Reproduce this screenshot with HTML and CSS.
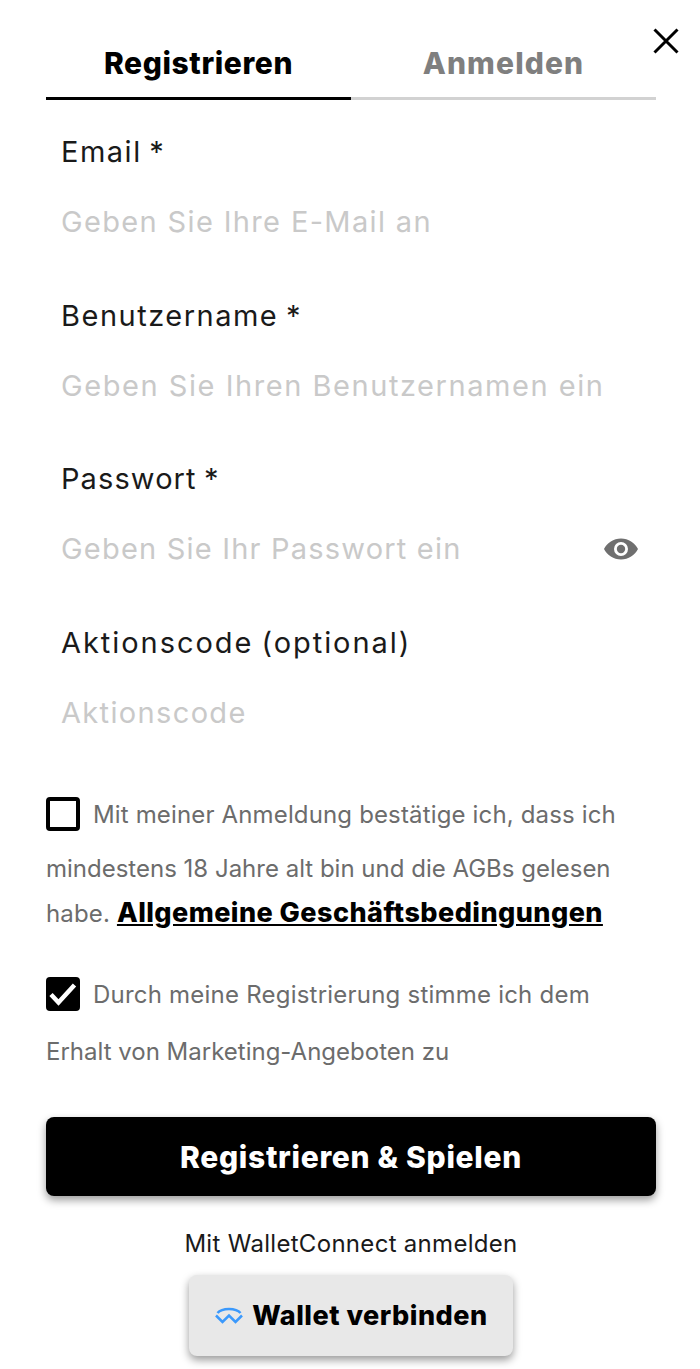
FILE: index.html
```html
<!DOCTYPE html>
<html lang="de">
<head>
<meta charset="utf-8">
<title>Registrieren</title>
<link rel="stylesheet" href="styles.css">
</head>
<body>
<main class="modal">
  <button class="close" aria-label="Schließen">
    <svg width="28" height="28" viewBox="0 0 28 28"><path d="M2.500 2.500 25.500 25.500M25.500 2.500 2.500 25.500" fill="none" stroke="#000" stroke-width="3"/></svg>
  </button>
  <nav class="tabs">
    <div class="tab active">Registrieren</div>
    <div class="tab second">Anmelden</div>
  </nav>
  <form class="form">
    <div class="field">
      <div class="label">Email *</div>
      <div class="input">Geben Sie Ihre E-Mail an</div>
    </div>
    <div class="field">
      <div class="label">Benutzername *</div>
      <div class="input wide">Geben Sie Ihren Benutzernamen ein</div>
    </div>
    <div class="field">
      <div class="label tight">Passwort *</div>
      <div class="input narrow">Geben Sie Ihr Passwort ein
        <svg class="eye" width="36" height="24" viewBox="0 0 36 24"><path fill-rule="evenodd" d="M18 1.500C10.500 1.500 4.200 5.800 1 12c3.200 6.200 9.500 10.500 17 10.500S31.800 18.200 35 12C31.800 5.800 25.500 1.500 18 1.500Zm0 3.500a7 7 0 1 1 0 14 7 7 0 0 1 0-14Z" fill="#6f6f6f"/><circle cx="18" cy="12" r="4.200" fill="#6f6f6f"/></svg>
      </div>
    </div>
    <div class="field">
      <div class="label loose">Aktionscode (optional)</div>
      <div class="input">Aktionscode</div>
    </div>
  </form>
  <section class="consents">
    <div class="consent first">
      <div class="line lead"><span class="box"></span>Mit meiner Anmeldung bestätige ich, dass ich</div>
      <div class="line l2">mindestens 18 Jahre alt bin und die AGBs gelesen</div>
      <div class="line l3">habe. <a class="terms" href="#">Allgemeine Geschäftsbedingungen</a></div>
    </div>
    <div class="consent">
      <div class="line lead wider"><span class="box checked"><svg width="34" height="34" viewBox="0 0 34 34"><path d="M5 17.500 12.500 25.500 28.500 8" fill="none" stroke="#fff" stroke-width="4.500"/></svg></span>Durch meine Registrierung stimme ich dem</div>
      <div class="line l2b">Erhalt von Marketing-Angeboten zu</div>
    </div>
  </section>
  <button class="submit">Registrieren &amp; Spielen</button>
  <p class="wc-text">Mit WalletConnect anmelden</p>
  <button class="wallet">
    <svg width="30" height="18" viewBox="0 0 30 18"><path d="M3.500 6C8 .5 22 .5 26.500 6M2 8.500 8.500 15 15 8.500 21.500 15 28 8.500" fill="none" stroke="#3b99fc" stroke-width="2.500"/></svg>
    Wallet verbinden
  </button>
</main>
</body>
</html>
```
FILE: styles.css
```css
* { box-sizing: border-box; }
html, body { margin: 0; padding: 0; background: #fff; }
body { font-family: Inter, "Open Sans", "Liberation Sans", sans-serif; color: #111; height: 1369px; overflow: hidden; }
.modal { position: relative; padding: 0 44px 0 46px; }
button { font-family: inherit; cursor: pointer; }
.close { position: absolute; top: 27px; right: 20px; width: 28px; height: 28px; padding: 0; border: 0; background: none; display: flex; }
.tabs { display: flex; padding-top: 40px; }
.tab { flex: 1; height: 60px; line-height: 47px; text-align: center; font-size: 30px; font-weight: 800; letter-spacing: 0.6px; color: #7f7f7f; border-bottom: 3px solid #d2d2d2; }
.tab.second { letter-spacing: 1.1px; }
.tab.active { color: #000; border-bottom-color: #000; }
.form { padding: 0 15px; }
.field { height: 163.500px; padding-top: 34px; }
.label { height: 36px; line-height: 36px; font-size: 29px; font-weight: 400; color: #1a1a1a; letter-spacing: 1.5px; word-spacing: -2px; }
.label.tight { letter-spacing: 1.1px; }
.label.loose { letter-spacing: 1.95px; }
.input { display: flex; justify-content: space-between; align-items: center; height: 36px; margin-top: 34px; line-height: 36px; font-size: 29px; color: #c9c9c9; letter-spacing: 1.35px; white-space: nowrap; }
.input.wide { letter-spacing: 1.55px; }
.input.narrow { letter-spacing: 1.2px; }
.eye { flex: none; margin-right: 2px; }
.consents { padding-top: 43px; padding-bottom: 1px; color: #6c6c6c; font-size: 24px; }
.consent { margin-bottom: 48px; }
.line { white-space: nowrap; letter-spacing: 0.15px; }
.lead.wider { letter-spacing: 0.22px; }
.lead { display: flex; align-items: center; height: 34px; }
.l2 { margin-top: 22px; height: 32px; line-height: 32px; letter-spacing: 0; }
.l3 { margin-top: 12px; height: 32px; line-height: 32px; }
.l2b { margin-top: 25px; height: 32px; line-height: 32px; letter-spacing: 0; }
.box { flex: none; width: 34px; height: 34px; margin-right: 13px; border: 4px solid #000; border-radius: 4px; background: #fff; display: block; }
.box.checked { background: #000; border: 0; }
.box svg { display: block; }
.terms { color: #000; font-weight: 800; font-size: 27px; letter-spacing: 0.45px; text-decoration: underline; }
.submit { display: block; width: 100%; height: 79px; margin: 0; border: 0; border-radius: 8px; background: #000; color: #fff; font-size: 30px; font-weight: 800; letter-spacing: 0.7px; box-shadow: 0 4px 8px rgba(0,0,0,.4); }
.wc-text { margin: 32px 0 0; text-align: center; font-size: 24px; line-height: 32px; color: #1a1a1a; letter-spacing: 0.3px; }
.wallet { display: flex; align-items: center; justify-content: center; gap: 8px; width: 324px; height: 81px; margin: 15px auto 0; border: 0; border-radius: 8px; background: #e8e8e8; color: #000; font-size: 27px; font-weight: 800; letter-spacing: 0.5px; box-shadow: 0 4px 8px rgba(0,0,0,.4); }
```
